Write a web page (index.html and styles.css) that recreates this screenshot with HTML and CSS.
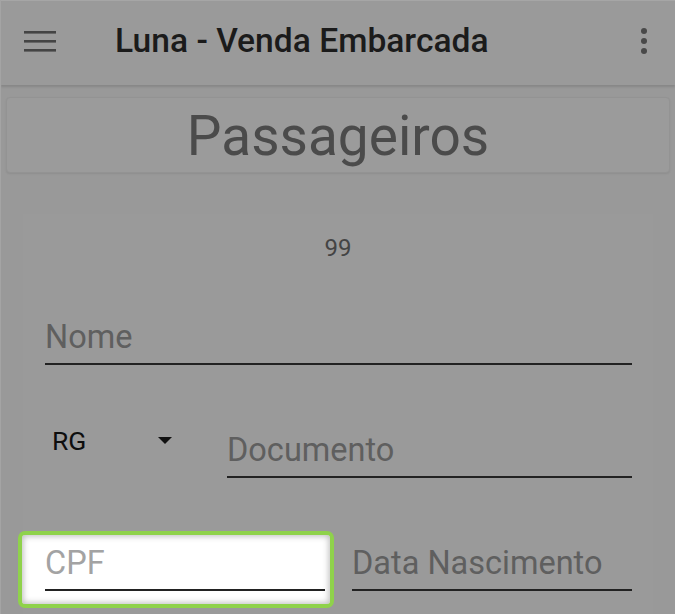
FILE: index.html
```html
<!DOCTYPE html>
<html lang="pt-BR">
<head>
<meta charset="utf-8">
<title>Luna - Venda Embarcada</title>
<link rel="stylesheet" href="styles.css">
</head>
<body>
<header class="toolbar">
  <svg class="menu-icon" width="32" height="22" viewBox="0 0 32 22" aria-hidden="true">
    <rect x="0" y="1" width="32" height="2.6" fill="#444"/>
    <rect x="0" y="10" width="32" height="2.6" fill="#444"/>
    <rect x="0" y="19" width="32" height="2.6" fill="#444"/>
  </svg>
  <h1 class="app-title">Luna - Venda Embarcada</h1>
  <svg class="more-icon" width="8" height="28" viewBox="0 0 8 28" aria-hidden="true">
    <circle cx="4" cy="4" r="3" fill="#494949"/>
    <circle cx="4" cy="14" r="3" fill="#494949"/>
    <circle cx="4" cy="24" r="3" fill="#494949"/>
  </svg>
</header>
<main class="content">
  <div class="title-card">Passageiros</div>
  <section class="form">
    <div class="counter">99</div>
    <div class="field field-full"><span class="hint">Nome</span></div>
    <div class="row doc-row">
      <div class="spinner">
        <span class="spinner-value">RG</span>
        <span class="spinner-arrow"></span>
      </div>
      <div class="field field-grow"><span class="hint">Documento</span></div>
    </div>
    <div class="row pair-row">
      <div class="focus-ring">
        <div class="field"><span class="hint hint-light">CPF</span></div>
      </div>
      <div class="field field-half"><span class="hint">Data Nascimento</span></div>
    </div>
  </section>
</main>
</body>
</html>
```

FILE: styles.css
```css
* { box-sizing: border-box; }

html, body {
  margin: 0;
  padding: 0;
}

body {
  width: 675px;
  height: 614px;
  overflow: hidden;
  background: #999999;
  font-family: Roboto, "Noto Sans", sans-serif;
  border-left: 1px solid #a4a4a4;
}

.toolbar {
  height: 85px;
  display: flex;
  align-items: center;
  padding: 0 27px 0 23px;
  background: #9a9a9a;
  border-top: 1px solid #a6a6a6;
  box-shadow: 0 2px 2px rgba(0, 0, 0, 0.12);
  position: relative;
}

.menu-icon {
  flex: none;
  margin-top: -4px;
}

.app-title {
  margin: -5px 0 0 59px;
  flex: 1;
  font-size: 33.6px;
  font-weight: 500;
  color: #1b1b1b;
  line-height: 38px;
}

.more-icon {
  flex: none;
  margin-top: -5px;
}

.content {
  padding: 12px 5px 0 5px;
}

.title-card {
  height: 76px;
  border: 1px solid #939393;
  border-radius: 4px;
  background: #9b9b9b;
  box-shadow: 0 1px 2px rgba(0, 0, 0, 0.08);
  text-align: center;
  font-size: 55px;
  line-height: 76px;
  color: #4b4b4b;
  font-weight: 400;
}

.form {
  margin: 41px 17px 0 17px;
  padding: 20px 21px 0 22px;
  background: #9a9a9a;
  height: 420px;
}

.counter {
  text-align: center;
  font-size: 24px;
  line-height: 28px;
  color: #444444;
  margin-left: -1px;
}

.field {
  border-bottom: 2px solid #222222;
  padding-bottom: 7px;
  font-size: 32.5px;
  line-height: 38px;
}

.hint {
  color: #5f5f5f;
}

.hint-light {
  color: #a3a3a3;
}

.field-full {
  margin-top: 56px;
}

.row {
  display: flex;
  align-items: flex-start;
}

.doc-row {
  margin-top: 66px;
}

.spinner {
  width: 182px;
  flex: none;
  display: flex;
  align-items: center;
  padding-left: 7px;
  margin-top: -5px;
  height: 30px;
}

.spinner-value {
  font-size: 26.5px;
  line-height: 30px;
  color: #0e0e0e;
  width: 107px;
}

.spinner-arrow {
  width: 0;
  height: 0;
  border-left: 7px solid transparent;
  border-right: 7px solid transparent;
  border-top: 7px solid #111111;
  margin-top: -2px;
  margin-left: -1px;
}

.field-grow {
  flex: 1;
}

.pair-row {
  margin-top: 66px;
  gap: 27px;
}

.field-half {
  flex: 1;
}

.focus-ring {
  flex: 1;
  position: relative;
  isolation: isolate;
}

.focus-ring::before {
  content: "";
  position: absolute;
  left: -27px;
  top: -13px;
  right: -9px;
  bottom: -17px;
  border: 4px solid #8fd24b;
  border-radius: 7px;
  background: #ffffff;
  box-shadow: inset 0 0 6px 1px rgba(0, 0, 0, 0.28);
  z-index: -1;
}
```
